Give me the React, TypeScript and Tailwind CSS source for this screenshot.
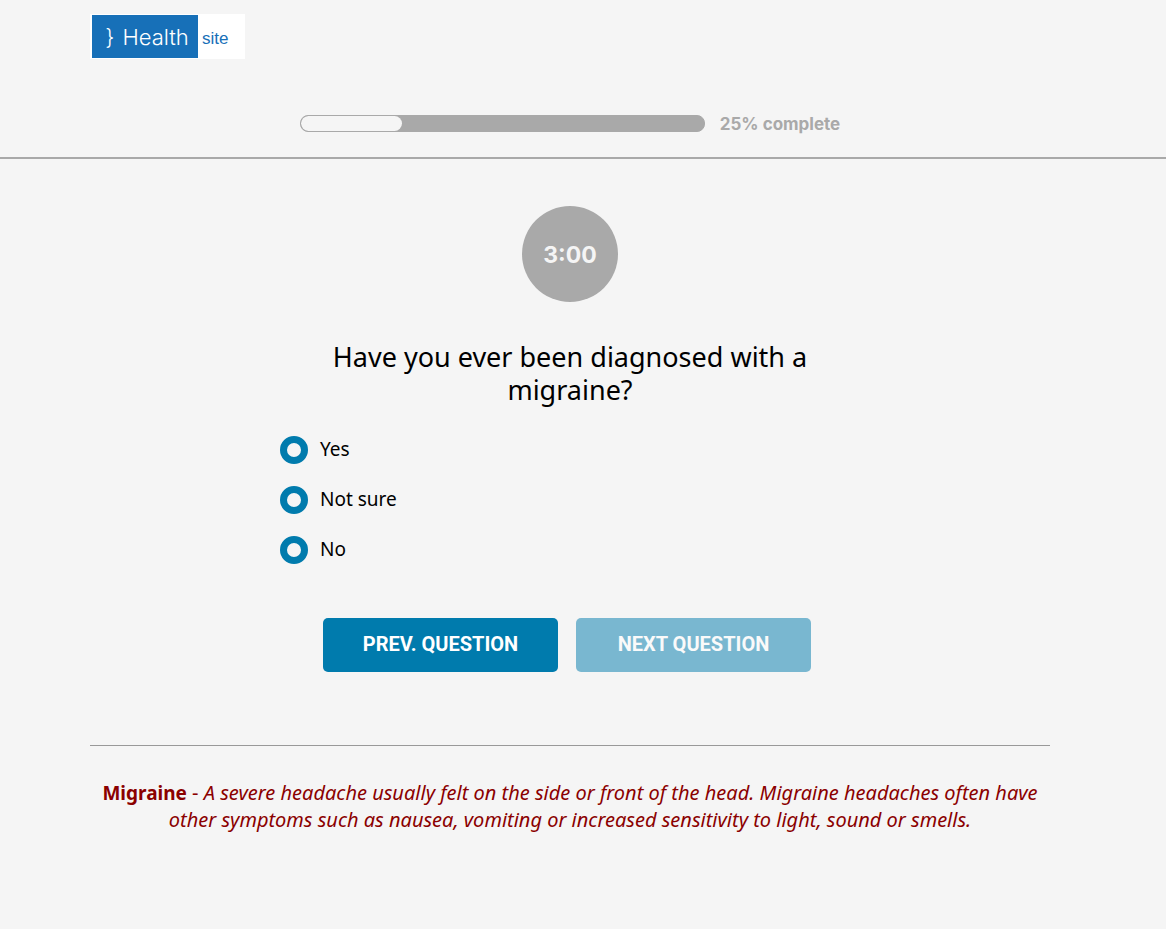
import { useState } from "react";

const answers = ["Yes", "Not sure", "No"];
const percent = 25;

function Logo() {
  return (
    <a
      href="#home"
      aria-label="Health site"
      className="inline-flex h-[45px] w-[155px] items-center bg-white pl-0.5 font-['Inter','Liberation_Sans',sans-serif]"
    >
      <span className="flex h-[43px] w-[106px] items-center justify-center gap-2 bg-[#1770b8] pt-0.5 pl-1 text-[22px] font-light text-white">
        <span>{"}"}</span>
        <span>Health</span>
      </span>
      <span className="pt-1 pl-1 font-['Liberation_Sans',sans-serif] text-[17px] text-[#1770b8]">site</span>
    </a>
  );
}

function Progress() {
  return (
    <div className="flex items-center justify-center gap-[15px]">
      <div
        role="progressbar"
        aria-label="Progress"
        aria-valuenow={percent}
        className="h-[17px] w-[405px] overflow-hidden rounded-lg border border-[#a9a9a9] bg-[#a9a9a9]"
      >
        <div className="h-full rounded-lg bg-[#f5f5f5]" style={{ width: `${percent}%` }} />
      </div>
      <span className="pt-0.5 font-['Inter','Noto_Sans',sans-serif] text-[17px] leading-5 font-bold text-[#a9a9a9]">
        {percent}% complete
      </span>
    </div>
  );
}

export default function App() {
  const [answer, setAnswer] = useState("");

  return (
    <div className="min-h-screen bg-[#f5f5f5] font-['Noto_Sans','Open_Sans',sans-serif] text-black">
      <header className="border-b-2 border-[#a9a9a9] pt-3.5 pr-[26px] pb-[23px]">
        <div className="mx-auto flex max-w-[960px] flex-col gap-[53px]">
          <div className="flex">
            <Logo />
          </div>
          <Progress />
        </div>
      </header>

      <main className="pr-[26px] pb-20">
        <div className="mx-auto flex max-w-[960px] flex-col items-center pt-[47px]">
          <div className="flex size-24 items-center justify-center rounded-full bg-[#a9a9a9] pt-0.5 font-['Inter','Noto_Sans',sans-serif] text-[23px] font-bold text-[#f5f5f5]">
            3:00
          </div>

          <form className="mt-[38px] flex w-full max-w-[580px] flex-col" onSubmit={(e) => e.preventDefault()}>
            <fieldset>
              <legend className="mx-auto max-w-[500px] text-center text-[27px] leading-[33px]">
                Have you ever been diagnosed with a migraine?
              </legend>
              <div className="mt-[19px] flex flex-col">
                {answers.map((label) => (
                  <label key={label} className="flex h-[50px] items-center gap-3 text-[19px]">
                    <input
                      type="radio"
                      name="diagnosed"
                      value={label}
                      checked={answer === label}
                      onChange={() => setAnswer(label)}
                      className="size-7 appearance-none rounded-full border-[7px] border-[#007bad] bg-[#f5f5f5] checked:bg-[#003f5c]"
                    />
                    <span className="pb-0.5">{label}</span>
                  </label>
                ))}
              </div>
            </fieldset>

            <div className="mt-[43px] flex justify-center gap-[18px] pr-1.5 font-['Roboto','Noto_Sans',sans-serif] text-xl font-bold text-white">
              <button type="button" className="h-[54px] w-[235px] rounded-[5px] bg-[#007bad] pb-0.5">
                PREV. QUESTION
              </button>
              <button
                type="submit"
                disabled={!answer}
                className="h-[54px] w-[235px] rounded-[5px] bg-[#007bad] pb-0.5 disabled:opacity-50"
              >
                NEXT QUESTION
              </button>
            </div>
          </form>

          <hr className="mt-[73px] w-full border-[#999999]" />
          <p className="mt-[33px] text-center text-xl leading-[27px] text-[#8b0000]">
            <strong className="text-[19px] leading-none">Migraine</strong> -{" "}
            <em>
              A severe headache usually felt on the side or front of the head. Migraine headaches often have other
              symptoms such as nausea, vomiting or increased sensitivity to light, sound or smells.
            </em>
          </p>
        </div>
      </main>
    </div>
  );
}
